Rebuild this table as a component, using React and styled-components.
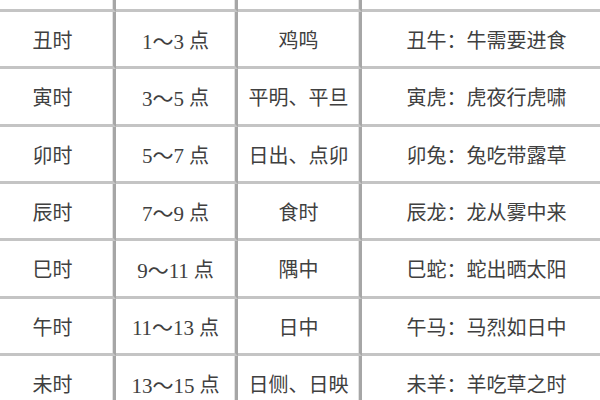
import React from 'react'
import styled, { createGlobalStyle } from 'styled-components'

const GlobalStyle = createGlobalStyle`
  html, body {
    margin: 0;
    padding: 0;
    background: #ffffff;
    overflow: hidden;
  }
  body {
    width: 600px;
    height: 400px;
  }
`

const Page = styled.div`
  width: 600px;
  height: 400px;
  overflow: hidden;
  background: #fff;
`

const Table = styled.div`
  width: 619px;
  margin-left: -8px;
  display: flex;
  flex-direction: column;
`

const Row = styled.div`
  display: grid;
  grid-template-columns: 124px 122px 124px 249px;
  height: ${({ $stub }) => ($stub ? '12px' : '57.33px')};
`

const Cell = styled.div`
  display: flex;
  align-items: center;
  justify-content: center;
  border-bottom: 3px solid #c4c4c4;
  border-right: ${({ $last }) => ($last ? 'none' : '3px solid #a6a6a6')};
  box-shadow: ${({ $last }) => ($last ? 'none' : 'inset -1px 0 0 #e2e2e2')};
  font-family: 'Noto Sans CJK SC', 'Liberation Serif', serif;
  font-size: 20px;
  color: #404040;
  white-space: nowrap;
  padding-top: 1px;
`

const Num = styled.span`
  font-family: 'Liberation Serif', 'Noto Sans CJK SC', serif;
  font-size: 21px;
  margin-right: 5px;
`

const rows = [
  ['丑时', '1', '3', '鸡鸣', '丑牛：牛需要进食'],
  ['寅时', '3', '5', '平明、平旦', '寅虎：虎夜行虎啸'],
  ['卯时', '5', '7', '日出、点卯', '卯兔：兔吃带露草'],
  ['辰时', '7', '9', '食时', '辰龙：龙从雾中来'],
  ['巳时', '9', '11', '隅中', '巳蛇：蛇出晒太阳'],
  ['午时', '11', '13', '日中', '午马：马烈如日中'],
  ['未时', '13', '15', '日侧、日映', '未羊：羊吃草之时'],
]

function App() {
  return (
    <Page>
      <GlobalStyle />
      <Table>
        {/* bottom edge of the row above, which is cut off */}
        <Row $stub>
          <Cell />
          <Cell />
          <Cell />
          <Cell $last />
        </Row>
        {rows.map(([name, from, to, alias, animal]) => (
          <Row key={name}>
            <Cell>{name}</Cell>
            <Cell>
              <Num>{from}～{to}</Num>点
            </Cell>
            <Cell>{alias}</Cell>
            <Cell $last>{animal}</Cell>
          </Row>
        ))}
      </Table>
    </Page>
  )
}

export default App
